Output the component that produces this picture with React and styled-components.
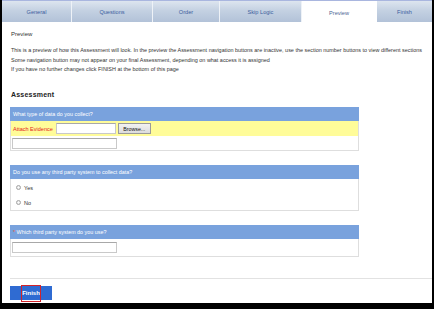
import styled, { createGlobalStyle } from 'styled-components';

const GlobalStyle = createGlobalStyle`
  html, body {
    margin: 0;
    padding: 0;
    background: #000;
  }
  * {
    box-sizing: border-box;
  }
`;

const tabs = [
  { label: 'General', width: 70 },
  { label: 'Questions', width: 81 },
  { label: 'Order', width: 67 },
  { label: 'Skip Logic', width: 82 },
  { label: 'Preview', width: 75, active: true },
  { label: 'Finish', width: 55 },
];

const App = () => {
  return (
    <>
      <GlobalStyle />
      <Frame>
        <TabBar>
          {tabs.map((t) => (
            <Tab key={t.label} $width={t.width} $active={t.active}>
              {t.label}
            </Tab>
          ))}
        </TabBar>
        <Content>
          <PageTitle>Preview</PageTitle>
          <Intro>
            This is a preview of how this Assessment will look. In the preview the Assessment
            navigation buttons are inactive, use the section number buttons to view different
            sections
            <br />
            Some navigation button may not appear on your final Assessment, depending on what
            access it is assigned
            <br />
            If you have no further changes click FINISH at the bottom of this page
          </Intro>
          <Heading>Assessment</Heading>

          <Section>
            <SectionHeader>What type of data do you collect?</SectionHeader>
            <EvidenceRow>
              <EvidenceLabel>Attach Evidence</EvidenceLabel>
              <TextBox $width={60} />
              <BrowseButton>Browse...</BrowseButton>
            </EvidenceRow>
            <AnswerRow>
              <TextBox $width={105} />
            </AnswerRow>
          </Section>

          <Section>
            <SectionHeader>Do you use any third party system to collect data?</SectionHeader>
            <RadioList>
              <RadioRow>
                <Radio />
                Yes
              </RadioRow>
              <RadioRow>
                <Radio />
                No
              </RadioRow>
            </RadioList>
          </Section>

          <Section>
            <SectionHeader>
              <Star>*</Star> Which third party system do you use?
            </SectionHeader>
            <AnswerRow $top={2.5} $bottom={3}>
              <TextBox $width={105} />
            </AnswerRow>
          </Section>
        </Content>
        <Footer>
          <FinishButton>
            Finish
            <Highlight />
          </FinishButton>
        </Footer>
      </Frame>
    </>
  );
};

const Frame = styled.div`
  width: 430px;
  height: 303px;
  margin: 0 2px;
  background: #fff;
  font-family: 'Liberation Sans', Arial, sans-serif;
  color: #333;
  overflow: hidden;
`;

const TabBar = styled.div`
  display: flex;
  height: 22px;
  border-top: 1px solid #a9b6df;
`;

const Tab = styled.div`
  width: ${({ $width }) => $width}px;
  height: 100%;
  display: flex;
  align-items: center;
  justify-content: center;
  font-size: 5.6px;
  color: ${({ $active }) => ($active ? '#4d6594' : '#3d5e9e')};
  background: ${({ $active }) =>
    $active ? '#fff' : 'linear-gradient(#dde5ef, #c4d1e2 45%, #b2c2d8)'};
  border-right: 1px solid ${({ $active }) => ($active ? '#fff' : '#eef2f7')};
  border-top: ${({ $active }) => ($active ? '2px solid #fff' : 'none')};
  &:last-child {
    border-right: none;
  }
`;

const Content = styled.div`
  padding-left: 9px;
`;

const PageTitle = styled.div`
  margin-top: 8px;
  font-size: 6px;
  line-height: 8px;
  color: #333;
`;

const Intro = styled.div`
  margin-top: 8px;
  width: 440px;
  font-size: 5.45px;
  line-height: 9.5px;
  white-space: nowrap;
  color: #333;
`;

const Heading = styled.div`
  margin-top: 15.5px;
  font-size: 7px;
  line-height: 10px;
  font-weight: bold;
  letter-spacing: 0.2px;
  color: #222;
`;

const Section = styled.div`
  width: 349px;
  margin-left: -1px;
  margin-top: 7px;
  border: 1px solid #dedede;
  border-top: none;
  & + & {
    margin-top: 14px;
  }
`;

const SectionHeader = styled.div`
  height: 14px;
  margin: 0 -1px;
  padding-left: 3px;
  display: flex;
  align-items: center;
  background: #79a2dd;
  color: #fff;
  font-size: 5.4px;
  white-space: pre;
`;

const Star = styled.span`
  color: #e8593c;
`;

const EvidenceRow = styled.div`
  height: 15px;
  display: flex;
  align-items: center;
  gap: 2px;
  padding-left: 2px;
  background: #fffc99;
`;

const EvidenceLabel = styled.span`
  color: #e4201a;
  font-size: 5.5px;
  margin-right: 1px;
`;

const TextBox = styled.div`
  width: ${({ $width }) => $width}px;
  height: 11px;
  background: #fff;
  border: 1px solid #c9c9c9;
  border-top-color: #a8a8a8;
`;

const BrowseButton = styled.div`
  width: 33px;
  height: 11px;
  display: flex;
  align-items: center;
  justify-content: center;
  font-size: 5.3px;
  color: #111;
  background: linear-gradient(#f2f2f2, #dcdcdc);
  border: 1px solid #9a9a9a;
`;

const AnswerRow = styled.div`
  padding: ${({ $top }) => $top ?? 2}px 0 ${({ $bottom }) => $bottom ?? 1}px 1px;
`;

const RadioList = styled.div`
  display: flex;
  flex-direction: column;
`;

const RadioRow = styled.div`
  height: 15px;
  display: flex;
  align-items: center;
  gap: 3px;
  padding-left: 5px;
  font-size: 5.5px;
  color: #333;
  &:first-child {
    margin-top: 1px;
  }
`;

const Radio = styled.span`
  width: 5px;
  height: 5px;
  border-radius: 50%;
  border: 1px solid #a4a4a4;
  background: radial-gradient(#fdfdfd, #e0e0e0);
`;

const Footer = styled.div`
  margin: 21px 0 0 8px;
  padding-top: 7.5px;
  border-top: 1px solid #e2e2e2;
`;

const FinishButton = styled.div`
  position: relative;
  width: 42px;
  height: 14px;
  display: flex;
  align-items: center;
  justify-content: center;
  background: #2f6bd2;
  color: #fff;
  font-size: 6px;
  font-weight: bold;
`;

const Highlight = styled.span`
  position: absolute;
  left: 11px;
  top: -1.5px;
  width: 20px;
  height: 17px;
  border: 1px solid #d2232a;
`;

export default App;
